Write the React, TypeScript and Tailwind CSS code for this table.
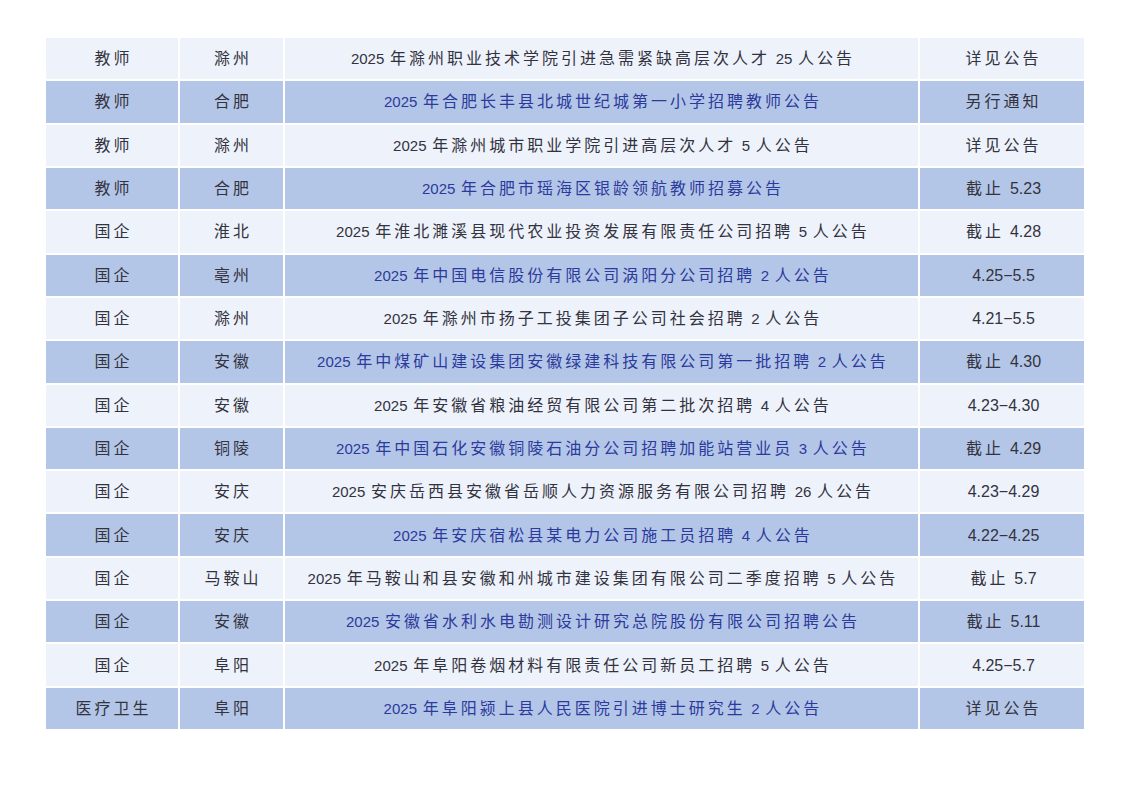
const rows: [string, string, string, string][] = [
  ['教师', '滁州', '2025 年滁州职业技术学院引进急需紧缺高层次人才 25 人公告', '详见公告'],
  ['教师', '合肥', '2025 年合肥长丰县北城世纪城第一小学招聘教师公告', '另行通知'],
  ['教师', '滁州', '2025 年滁州城市职业学院引进高层次人才 5 人公告', '详见公告'],
  ['教师', '合肥', '2025 年合肥市瑶海区银龄领航教师招募公告', '截止 5.23'],
  ['国企', '淮北', '2025 年淮北濉溪县现代农业投资发展有限责任公司招聘 5 人公告', '截止 4.28'],
  ['国企', '亳州', '2025 年中国电信股份有限公司涡阳分公司招聘 2 人公告', '4.25−5.5'],
  ['国企', '滁州', '2025 年滁州市扬子工投集团子公司社会招聘 2 人公告', '4.21−5.5'],
  ['国企', '安徽', '2025 年中煤矿山建设集团安徽绿建科技有限公司第一批招聘 2 人公告', '截止 4.30'],
  ['国企', '安徽', '2025 年安徽省粮油经贸有限公司第二批次招聘 4 人公告', '4.23−4.30'],
  ['国企', '铜陵', '2025 年中国石化安徽铜陵石油分公司招聘加能站营业员 3 人公告', '截止 4.29'],
  ['国企', '安庆', '2025 安庆岳西县安徽省岳顺人力资源服务有限公司招聘 26 人公告', '4.23−4.29'],
  ['国企', '安庆', '2025 年安庆宿松县某电力公司施工员招聘 4 人公告', '4.22−4.25'],
  ['国企', '马鞍山', '2025 年马鞍山和县安徽和州城市建设集团有限公司二季度招聘 5 人公告', '截止 5.7'],
  ['国企', '安徽', '2025 安徽省水利水电勘测设计研究总院股份有限公司招聘公告', '截止 5.11'],
  ['国企', '阜阳', '2025 年阜阳卷烟材料有限责任公司新员工招聘 5 人公告', '4.25−5.7'],
  ['医疗卫生', '阜阳', '2025 年阜阳颍上县人民医院引进博士研究生 2 人公告', '详见公告'],
];

// CJK runs get letter spacing, digits/latin stay tight
function Text({ value, latin }: { value: string; latin: string }) {
  const parts = value.split(/([\u4e00-\u9fff]+)/).filter(Boolean);
  return (
    <span className="whitespace-pre [word-spacing:1.5px]">
      {parts.map((p, i) =>
        /[\u4e00-\u9fff]/.test(p) ? (
          <span key={i} className="tracking-[3px]">{p}</span>
        ) : (
          <span key={i} className={latin}>{p}</span>
        )
      )}
    </span>
  );
}

export default function App() {
  return (
    <div className="w-[1132px] h-[800px] bg-white pt-[38px] pl-[46px] font-['Liberation_Sans','Noto_Sans_CJK_SC',sans-serif] text-[16px] text-[#333340]">
      <div className="w-[1038px] h-[691px] grid grid-cols-[132px_103px_633px_1fr] grid-rows-[repeat(16,1fr)] gap-[2px]">
        {rows.map((r, i) => {
          const dark = i % 2 === 1;
          const bg = dark ? 'bg-[#b4c6e7]' : 'bg-[#eef2fb]';
          return [
            <div key={i + 'a'} className={`${bg} flex items-center justify-center pl-[3px] pt-[1px]`}>
              <Text value={r[0]} latin="text-[15px]" />
            </div>,
            <div key={i + 'b'} className={`${bg} flex items-center justify-center pl-[3px] pt-[1px]`}>
              <Text value={r[1]} latin="text-[15px]" />
            </div>,
            <div
              key={i + 'c'}
              className={`${bg} flex items-center justify-center pl-[3px] pt-[1px] ${dark ? 'text-[#2b3a9c]' : ''}`}
            >
              <Text value={r[2]} latin="text-[15px]" />
            </div>,
            <div key={i + 'd'} className={`${bg} flex items-center justify-center pl-[3px] pt-[1px]`}>
              <Text value={r[3]} latin="text-[16px]" />
            </div>,
          ];
        })}
      </div>
    </div>
  );
}
